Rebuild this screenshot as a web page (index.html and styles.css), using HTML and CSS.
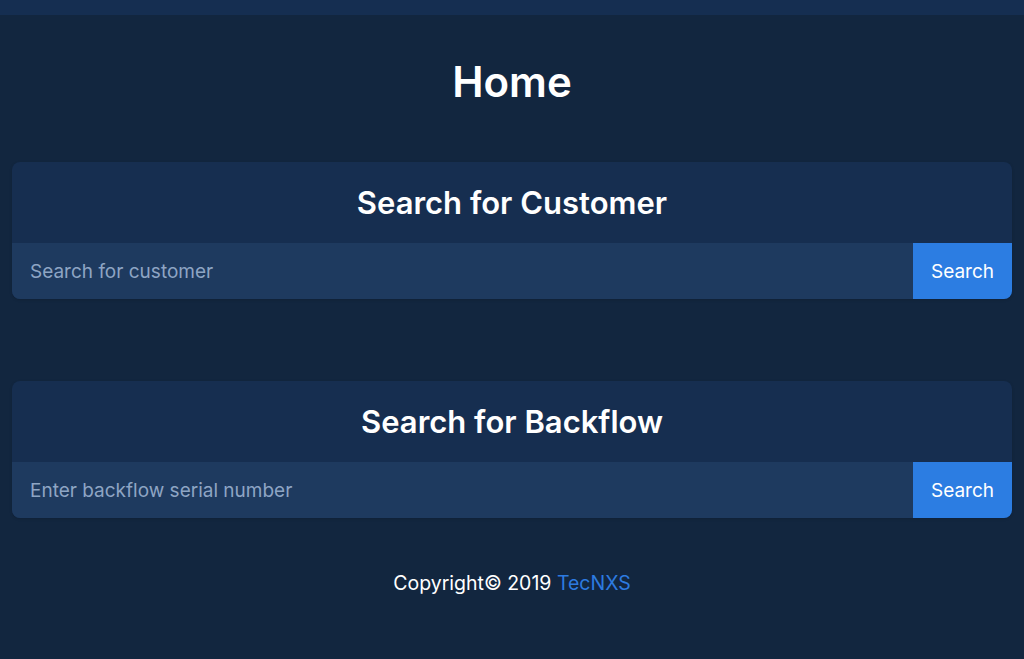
FILE: index.html
```html
<!DOCTYPE html>
<html lang="en">
<head>
   <meta charset="UTF-8">
   <title>Home</title>
   <link rel="stylesheet" href="styles.css">
</head>
<body>
<div class="topbar"></div>

<main class="page">
   <h1 class="page_title">Home</h1>

   <section class="card">
      <h2 class="card_title">Search for Customer</h2>
      <form class="search_row">
         <input class="search_input" type="text" placeholder="Search for customer">
         <button class="search_button" type="button">Search</button>
      </form>
   </section>

   <section class="card">
      <h2 class="card_title">Search for Backflow</h2>
      <form class="search_row">
         <input class="search_input" type="text" placeholder="Enter backflow serial number">
         <button class="search_button" type="button">Search</button>
      </form>
   </section>

   <footer class="footer">
      Copyright© 2019 <a class="footer_link" href="#">TecNXS</a>
   </footer>
</main>
</body>
</html>
```

FILE: styles.css
```css
* {
   box-sizing: border-box;
}

body {
   margin: 0;
   min-height: 659px;
   background-color: #12263f;
   color: #ffffff;
   font-family: "Inter", "Noto Sans", sans-serif;
}

.topbar {
   height: 15px;
   background-color: #152e51;
}

.page {
   display: flex;
   flex-direction: column;
   padding: 0 12px 0 12px;
}

.page_title {
   margin: 0;
   padding: 42px 0 55px 0;
   text-align: center;
   font-size: 42px;
   line-height: 50px;
   font-weight: 600;
}

.card {
   margin-bottom: 82px;
   border-radius: 8px;
   background-color: #162e50;
   box-shadow: 0 1px 3px rgba(0, 0, 0, 0.15);
   overflow: hidden;
}

.card_title {
   margin: 0;
   height: 81px;
   display: flex;
   align-items: center;
   justify-content: center;
   font-size: 31px;
   font-weight: 600;
}

.search_row {
   display: flex;
   margin: 0;
   height: 56px;
}

.search_input {
   flex: 1;
   border: none;
   outline: none;
   padding: 0 18px;
   background-color: #1e3a5f;
   color: #ffffff;
   font-family: inherit;
   font-size: 19px;
}

.search_input::placeholder {
   color: #8ea5c4;
}

.search_button {
   width: 99px;
   border: none;
   background-color: #2c7de2;
   color: #ffffff;
   font-family: inherit;
   font-size: 19px;
   cursor: pointer;
}

.footer {
   margin-top: -29px;
   text-align: center;
   font-size: 19.5px;
   line-height: 24px;
}

.footer_link {
   color: #2d7be0;
   text-decoration: none;
}
```
